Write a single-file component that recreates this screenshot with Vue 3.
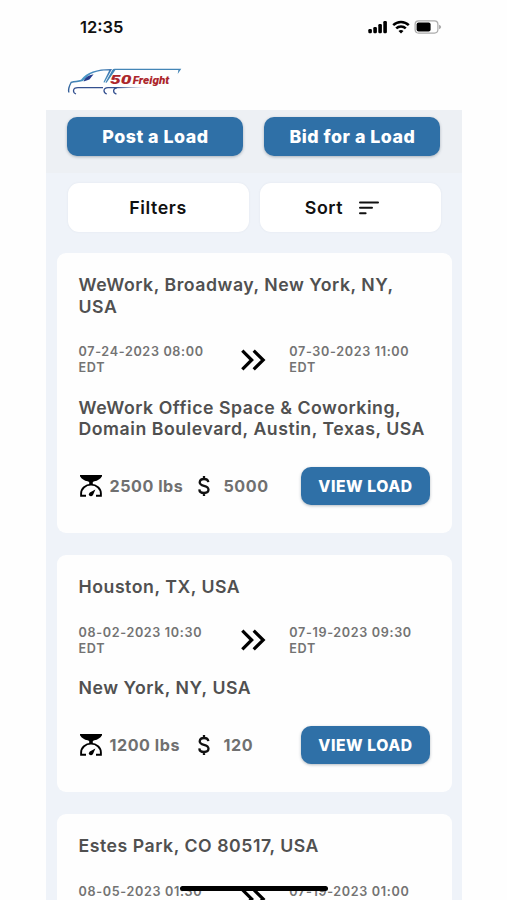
<script setup>
const loads = [
  {
    from: 'WeWork, Broadway, New York, NY, USA',
    to: 'WeWork Office Space & Coworking, Domain Boulevard, Austin, Texas, USA',
    pickup: '07-24-2023 08:00 EDT',
    dropoff: '07-30-2023 11:00 EDT',
    weight: '2500 lbs',
    price: '5000',
  },
  {
    from: 'Houston, TX, USA',
    to: 'New York, NY, USA',
    pickup: '08-02-2023 10:30 EDT',
    dropoff: '07-19-2023 09:30 EDT',
    weight: '1200 lbs',
    price: '120',
  },
  {
    from: 'Estes Park, CO 80517, USA',
    pickup: '08-05-2023 01:30',
    dropoff: '07-19-2023 01:00',
  },
]
</script>

<template>
  <div class="screen">
    <header class="status">
      <span class="time">12:35</span>
      <div class="indicators">
        <svg class="signal" width="20" height="14" viewBox="0 0 20 14">
          <rect x="0.3" y="9" width="3.6" height="4.2" rx="1.2" />
          <rect x="5.3" y="7" width="3.6" height="6.2" rx="1.2" />
          <rect x="10.3" y="4" width="3.6" height="9.2" rx="1.2" />
          <rect x="15.3" y="1" width="3.6" height="12.2" rx="1.2" />
        </svg>
        <svg class="wifi" width="18" height="14" viewBox="0 0 18 14">
          <path d="M1.2 5.1a11.2 11.2 0 0 1 15.6 0M4.2 8.4a6.9 6.9 0 0 1 9.6 0" />
          <path class="solid" d="M9 13.6 6.5 11.1a3.6 3.6 0 0 1 5 0Z" />
        </svg>
        <svg class="battery" width="28" height="14" viewBox="0 0 28 14">
          <rect class="shell" x="1.1" y="0.9" width="22.8" height="12.2" rx="3.5" />
          <rect x="2.6" y="2.4" width="14" height="9.2" rx="2" />
          <path class="tip" d="M25 4.8q2.2.8 2.2 2.2T25 9.2Z" />
        </svg>
      </div>
    </header>

    <div class="brand">
      <svg width="116" height="30" viewBox="0 0 116 30">
        <defs>
          <linearGradient id="cab" x1="0" x2="1" y1="1" y2="0">
            <stop offset="0" stop-color="#315894" />
            <stop offset="0.5" stop-color="#4b9bc8" />
            <stop offset="1" stop-color="#3c72ac" />
          </linearGradient>
          <linearGradient id="fade" gradientUnits="userSpaceOnUse" x1="50" x2="83" y1="0" y2="0">
            <stop offset="0" stop-color="#34508f" />
            <stop offset="1" stop-color="#34508f" stop-opacity="0.15" />
          </linearGradient>
        </defs>
        <path fill="url(#cab)" d="M1.2 25.5C.3 22.3 1.3 19.2 3.7 14.7 7.4 13.8 11 13.7 14 12.8 20.2 5.2 29.5 2 45 2.1L37.6 15.6 36.4 15.2 42.2 3.4C30.8 3.2 22.5 5.2 16.1 14 11.5 15.2 7.6 15.2 4.6 15.9 2.5 19.7 2 22.6 2.5 25.5Z" />
        <path fill="#4385b6" d="M38.4 15.4 45.3 3.1Q46 1.8 47.8 1.8H114.3L110.7 7 111.4 3.1H48.4L39.6 15.8Z" />
        <path fill="#253b8c" d="M16.6 14.4Q18.3 8.7 26.6 7.3L22.4 12.4Z" />
        <path class="wheels" d="M36 20.7H11Q6.8 20.7 6.5 23.6 6.4 26 9 27M50 20.7H41Q37.2 20.9 37 23.6 37 26.2 39.8 27M50 20.8Q46.6 21.4 46.6 23.8 46.6 26.4 49.4 27" />
        <path fill="url(#fade)" d="M50 20.05 83 20.5 50 21.35Z" />
        <text x="43" y="16.9" class="fifty" textLength="21.5" lengthAdjust="spacingAndGlyphs">50</text>
        <text x="65.8" y="16.6" class="freight" textLength="36.5" lengthAdjust="spacingAndGlyphs">Freight</text>
      </svg>
    </div>

    <main class="app">
      <nav class="modes">
        <button class="primary">Post a Load</button>
        <button class="primary">Bid for a Load</button>
      </nav>
      <div class="tools">
        <button class="tool">Filters</button>
        <button class="tool sort">
          Sort
          <svg width="20" height="14" viewBox="0 0 20 14">
            <path d="M1 1.4h18M1 6.8h12M1 12.2h5.6" />
          </svg>
        </button>
      </div>

      <section class="list">
        <article v-for="load in loads" :key="load.from" class="card">
          <h2>{{ load.from }}</h2>
          <div class="dates">
            <span>{{ load.pickup }}</span>
            <svg class="arrows" width="26" height="22" viewBox="0 0 26 22">
              <path d="m1.3 1.7 9.4 9.3-9.4 9.3M12.7 1.7l9.5 9.3-9.5 9.3" />
            </svg>
            <span>{{ load.dropoff }}</span>
          </div>
          <h2 v-if="load.to">{{ load.to }}</h2>
          <footer v-if="load.price">
            <svg class="scale" width="22" height="22" viewBox="0 0 22 22">
              <path class="solid" d="M0 0H22V1.2Q19.4 5.4 14.4 6.2L12.8 7V9.6H9.2V7L7.6 6.2Q2.6 5.4 0 1.2Z" />
              <path d="M6 20.8H1.1V18.6A9.9 9 0 0 1 20.9 18.6V20.8H16" />
              <path class="solid" d="M15.4 14.4 13 19.9Q11.5 22 9.4 20.8 7.8 19 9.8 17.4Z" />
            </svg>
            <span class="weight">{{ load.weight }}</span>
            <svg class="dollar" width="12" height="20" viewBox="0 0 12 20">
              <path d="M10.3 6.2Q10 3 6 3T1.7 6.3Q1.7 8.8 6 9.8T10.5 13.6Q10.5 17 6 17T1.3 13.4M6 0V3M6 17V20" />
            </svg>
            <span class="price">{{ load.price }}</span>
            <button class="primary view">VIEW LOAD</button>
          </footer>
        </article>
      </section>
    </main>
    <div class="home"></div>
  </div>
</template>

<style>
body {
  background: #fff;
  overflow: hidden;
}
</style>

<style scoped>
.screen {
  box-sizing: border-box;
  position: relative;
  width: 507px;
  height: 900px;
  padding: 0 45px 0 46px;
  overflow: hidden;
  background: #fefefe;
  font-family: Inter, "Liberation Sans", sans-serif;
}
svg {
  display: block;
  flex: none;
}
.status {
  display: flex;
  align-items: center;
  justify-content: space-between;
  height: 54px;
  padding: 0 20px 0 34px;
}
.time {
  color: #111;
  font-size: 16.5px;
  font-weight: 600;
}
.indicators {
  display: flex;
  align-items: center;
  gap: 4px;
}
.wifi path {
  fill: none;
  stroke: #000;
  stroke-width: 2.5;
}
.wifi .solid {
  fill: #000;
  stroke: none;
}
.battery .shell {
  fill: none;
  stroke: #aaa;
  stroke-width: 1.2;
}
.battery .tip {
  fill: #aaa;
}
.brand {
  height: 56px;
  padding: 13px 0 0 21px;
  box-sizing: border-box;
}
.wheels {
  fill: none;
  stroke: #34508f;
  stroke-width: 1.3;
}
.fifty,
.freight {
  fill: #ac262b;
  font-family: Roboto, Inter, sans-serif;
  font-style: italic;
  font-weight: 900;
}
.fifty {
  font-size: 13.5px;
}
.freight {
  font-size: 10.3px;
}
.app {
  height: 790px;
  overflow: hidden;
  background: #eff3f9;
}
button {
  border: 0;
  padding: 0;
  font-family: inherit;
}
.primary {
  border-radius: 10px;
  background: #2f70a7;
  box-shadow: 0 1px 3px rgba(40, 60, 80, 0.35);
  color: #fff;
  font-weight: 800;
}
.modes {
  display: flex;
  gap: 21px;
  box-sizing: border-box;
  height: 63px;
  padding: 7px 21.6px 17.5px 21.4px;
  background: #edf0f4;
}
.modes .primary {
  flex: 1;
  font-size: 17.8px;
  letter-spacing: 0.5px;
}
.tools {
  display: grid;
  grid-template-columns: 1fr 1fr;
  gap: 11px;
  padding: 10px 21.5px 21px;
}
.tool {
  height: 49px;
  border-radius: 11px;
  background: #fff;
  box-shadow: 0 0 2px rgba(80, 90, 120, 0.1);
  color: #111;
  font-size: 17.8px;
  font-weight: 600;
  letter-spacing: 0.6px;
}
.sort {
  display: flex;
  align-items: center;
  justify-content: center;
  gap: 16px;
  padding-right: 16px;
}
.sort svg path {
  fill: none;
  stroke: #111;
  stroke-width: 2;
  stroke-linecap: round;
}
.list {
  display: flex;
  flex-direction: column;
  gap: 22px;
  padding: 0 10.5px 0 11px;
}
.card {
  padding: 21px 21.5px 28px;
  border-radius: 9px;
  background: #fefefe;
}
h2 {
  margin: 0;
  color: #505050;
  font-size: 17.7px;
  font-weight: 600;
  line-height: 21.5px;
  letter-spacing: 0.53px;
}
.dates {
  display: grid;
  grid-template-columns: 140px 26px 130px;
  column-gap: 22.4px;
  height: 32px;
  margin: 27px 0 20.5px;
  color: #737373;
  font-size: 12.6px;
  font-weight: 600;
  line-height: 16px;
  letter-spacing: 0.66px;
}
.arrows {
  margin-top: 4.5px;
}
.arrows path {
  fill: none;
  stroke: #000;
  stroke-width: 3.2;
}
footer {
  display: flex;
  align-items: center;
  height: 38px;
  margin-top: 27.5px;
  color: #707070;
  font-size: 16.1px;
  font-weight: 700;
  letter-spacing: 0.55px;
}
.scale {
  margin: 0 8px 0 1px;
}
.scale path {
  fill: none;
  stroke: #000;
  stroke-width: 1.9;
}
.scale .solid {
  fill: #000;
  stroke: none;
}
.weight {
  width: 88.5px;
}
.dollar path {
  fill: none;
  stroke: #111;
  stroke-width: 2.3;
}
.price {
  margin-left: 13.5px;
}
.view {
  width: 129px;
  height: 38px;
  margin-left: auto;
  font-size: 15.7px;
  letter-spacing: 0.55px;
}
.home {
  position: absolute;
  left: 180px;
  top: 886px;
  width: 148px;
  height: 5px;
  border-radius: 3px;
  background: #000;
}
</style>
